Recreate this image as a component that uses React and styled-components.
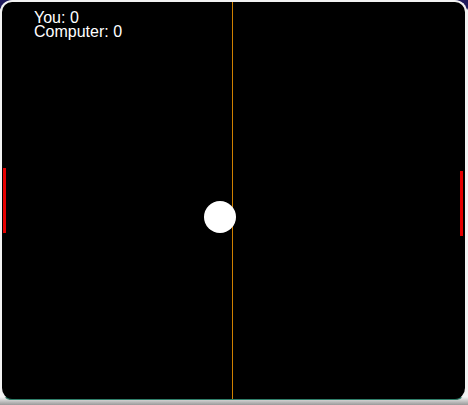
import React from 'react';
import styled, { createGlobalStyle } from 'styled-components';

const GlobalStyle = createGlobalStyle`
  html, body {
    margin: 0;
    padding: 0;
    height: 100%;
    background: linear-gradient(180deg, #1f1a5c 0%, #1f1a5c 2%, #f4f4f4 2.5%, #f4f4f4 98%, #9a9a9a 100%);
    font-family: "Liberation Sans", Arial, sans-serif;
  }
`;

const Board = styled.div`
  position: relative;
  box-sizing: border-box;
  width: 467px;
  height: 400px;
  background: #000;
  border: 2px solid #f2f2f2;
  border-bottom: 1px solid #2f7f6a;
  border-radius: 12px;
  overflow: hidden;
`;

const Score = styled.div`
  position: absolute;
  top: 9px;
  left: 32px;
  color: #fff;
  font-size: 16px;
  line-height: 14px;

  p {
    margin: 0;
  }
`;

const NetLine = styled.div`
  position: absolute;
  top: 0;
  bottom: 0;
  left: 230px;
  width: 1px;
  background: #d08000;
`;

const Paddle = styled.div`
  position: absolute;
  width: 3px;
  height: 65px;
  background: #e60000;
  top: ${(props) => props.$top}px;
  ${(props) => (props.$side === 'left' ? 'left: 1px;' : 'right: 2px;')}
`;

const Ball = styled.div`
  position: absolute;
  left: 202px;
  top: 199px;
  width: 32px;
  height: 32px;
  border-radius: 50%;
  background: #fff;
`;

function App() {
  return (
    <>
      <GlobalStyle />
      <Board>
        <NetLine />
        <Score>
          <p>You: 0</p>
          <p>Computer: 0</p>
        </Score>
        <Paddle $side="left" $top={166} />
        <Paddle $side="right" $top={169} />
        <Ball />
      </Board>
    </>
  );
}

export default App;
